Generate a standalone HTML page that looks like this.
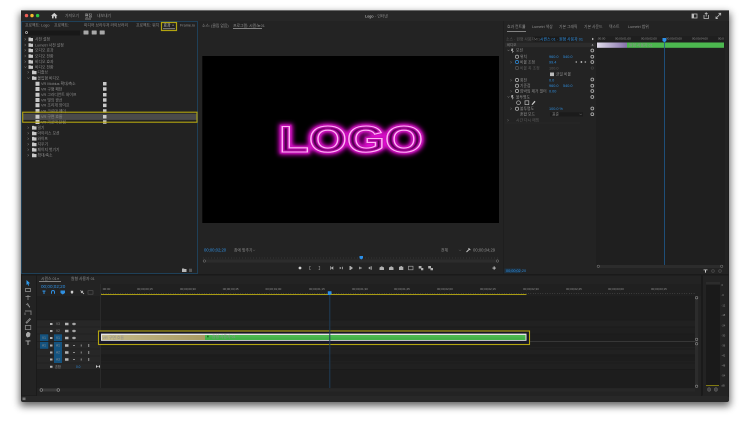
<!DOCTYPE html>
<html lang="ko"><head><meta charset="utf-8"><title>Logo</title>
<style>
html,body{margin:0;padding:0;background:#fff;width:750px;height:422px;overflow:hidden}
svg{display:block;filter:blur(.3px)}
text{font-family:"Liberation Sans","Noto Sans CJK KR",sans-serif;font-size:3.8px;fill:#8f8f8f}
.b{fill:#2f8fe0}.w{fill:#d8d8d8}.d{fill:#5c5c5c}.k{fill:#111}
.ic{fill:none;stroke:#bdbdbd;stroke-width:.8}
.f{fill:#c9c9c9}
.r{fill:none;stroke:#a8a8a8;stroke-width:.9}
</style></head><body>
<svg width="750" height="422" viewBox="0 0 750 422" xmlns="http://www.w3.org/2000/svg">
<defs>
<filter id="sh" x="-5%" y="-5%" width="110%" height="115%"><feGaussianBlur stdDeviation="4"/></filter>
<filter id="gl" x="-20%" y="-50%" width="140%" height="200%"><feGaussianBlur stdDeviation="2.4"/></filter>
<filter id="gs" x="-20%" y="-50%" width="140%" height="200%"><feGaussianBlur stdDeviation=".5"/></filter>
<linearGradient id="lav" x1="0" x2="1"><stop offset="0" stop-color="#e0dcea"/><stop offset="1" stop-color="#8672ac"/></linearGradient>
<linearGradient id="tan" x1="0" x2="1"><stop offset="0" stop-color="#c4b98a"/><stop offset="1" stop-color="#a89a62"/></linearGradient>
</defs>
<rect x="20" y="13" width="710" height="393" fill="#000" opacity=".62" filter="url(#sh)"/>
<rect x="21" y="10" width="708" height="392" rx="3" fill="#1a1a1a"/>
<rect x="21" y="10" width="708" height="1" fill="#6a6a6a"/>
<rect x="21" y="11" width="708" height="10" fill="#272727"/>

<!-- title bar -->
<circle cx="26.5" cy="15.6" r="1.7" fill="#ee5f57"/><circle cx="32" cy="15.6" r="1.7" fill="#f5bb2e"/><circle cx="37.6" cy="15.6" r="1.7" fill="#2bc640"/>
<path d="M51 15.7 54.3 12.9 57.5 15.7H56.5V18.4H55V16.4H53.6V18.4H52V15.7Z" fill="#cfcfcf"/>
<text x="65" y="17">가져오기</text><text x="85" y="17" class="w">편집</text><rect x="85" y="18.7" width="6" height=".6" fill="#bbb"/><text x="97" y="17">내보내기</text>
<text x="365" y="17.3" class="w">Logo</text><text x="375" y="17.3">- 인터넷</text>
<rect x="692" y="14" width="5" height="4" class="ic"/><rect x="692" y="14" width="2" height="4" fill="#bdbdbd"/>
<path d="M704 15V18.5H708.5V15M706.2 16.5V12.8M704.8 14 706.2 12.8 707.6 14" class="ic"/>
<path d="M716 18.5 720.5 13.5M718.5 13.3H720.7V15.5M716 16.5V18.6H718" class="ic"/>

<!-- project panel -->
<rect x="21.5" y="21.5" width="176" height="252" fill="#222" stroke="#1f4058" stroke-width="1"/>
<text x="25" y="26.5">프로젝트: Logo</text><text x="54" y="26.5">프로젝트:</text><text x="84" y="26.5">미디어 브라우저 라이브러리</text><text x="136" y="26.5">프로젝트: 위치</text>
<text x="163.5" y="26.5" class="w">효과</text><text x="172" y="26.5">≡</text><rect x="163" y="28.4" width="12" height=".7" fill="#aaa"/>
<rect x="161.5" y="22.5" width="15" height="8" fill="none" stroke="#b3a410" stroke-width="1.2"/>
<text x="180" y="26.5">Frame.io</text>
<rect x="24" y="30.5" width="56" height="5" fill="#181818"/><circle cx="26.5" cy="32.5" r="1" class="ic"/>
<rect x="83.5" y="30.5" width="5" height="4" rx=".5" fill="#a8a8a8"/><rect x="91.7" y="30.5" width="5" height="4" rx=".5" fill="#a8a8a8"/><rect x="99.7" y="30.5" width="5" height="4" rx=".5" fill="#a8a8a8"/>

<g>
<path d="M24.6 38.3 25.8 39.3 24.6 40.3M24.6 44 25.8 45 24.6 46M24.6 49.3 25.8 50.3 24.6 51.3M24.6 55 25.8 56 24.6 57M24.6 60.7 25.8 61.7 24.6 62.7M27.6 71.3 28.8 72.3 27.6 73.3M27.6 126.7 28.8 127.7 27.6 128.7M27.6 132.3 28.8 133.3 27.6 134.3M27.6 137.7 28.8 138.7 27.6 139.7M27.6 143.3 28.8 144.3 27.6 145.3M27.6 148.7 28.8 149.7 27.6 150.7M27.6 154.3 28.8 155.3 27.6 156.3" fill="none" stroke="#888" stroke-width=".5"/>
<path d="M24.4 66.5 25.4 67.7 26.4 66.5M27.4 77.5 28.4 78.7 29.4 77.5" fill="none" stroke="#888" stroke-width=".5"/>
<path class="f" d="M28.5 37.5H30.5L31 38H33V41.2H28.5ZM28.5 43.2H30.5L31 43.7H33V46.9H28.5ZM28.5 48.5H30.5L31 49H33V52.2H28.5ZM28.5 54.2H30.5L31 54.7H33V57.9H28.5ZM28.5 59.9H30.5L31 60.4H33V63.6H28.5ZM28.5 65.2H30.5L31 65.7H33V68.9H28.5ZM32 70.5H34L34.5 71H36.5V74.2H32ZM32 76.2H34L34.5 76.7H36.5V79.9H32ZM32 125.9H34L34.5 126.4H36.5V129.6H32ZM32 131.5H34L34.5 132H36.5V135.2H32ZM32 136.9H34L34.5 137.4H36.5V140.6H32ZM32 142.5H34L34.5 143H36.5V146.2H32ZM32 147.9H34L34.5 148.4H36.5V151.6H32ZM32 153.5H34L34.5 154H36.5V157.2H32Z"/>
<text x="35" y="40.7">사전 설정</text><text x="35" y="46.4">Lumetri 사전 설정</text><text x="35" y="51.7">오디오 효과</text><text x="35" y="57.4">오디오 전환</text><text x="35" y="63.1">비디오 효과</text><text x="35" y="68.4">비디오 전환</text>
<text x="37.5" y="73.7">디졸브</text><text x="37.5" y="79.4">몰입형 비디오</text>
<text x="37.5" y="129.1">밀기</text><text x="37.5" y="134.7">아이리스 모션</text><text x="37.5" y="140.1">와이프</text><text x="37.5" y="145.7">지우기</text><text x="37.5" y="151.1">페이지 벗기기</text><text x="37.5" y="156.7">확대/축소</text>
</g>
<rect x="23" y="113.7" width="173.5" height="6.2" fill="#4a4a4a"/>
<g>
<path class="f" d="M35.5 81.7H39.5V85.7H35.5ZM35.5 87H39.5V91H35.5ZM35.5 92.7H39.5V96.7H35.5ZM35.5 98H39.5V102H35.5ZM35.5 103.3H39.5V107.3H35.5ZM35.5 109H39.5V113H35.5ZM35.5 114.7H39.5V118.7H35.5ZM35.5 120H39.5V124H35.5Z"/>
<path class="f" d="M103 82H106.5V85.5H103ZM103 87.3H106.5V90.8H103ZM103 93H106.5V96.5H103ZM103 98.3H106.5V101.8H103ZM103 103.6H106.5V107.1H103ZM103 109.3H106.5V112.8H103ZM103 115H106.5V118.5H103ZM103 120.3H106.5V123.8H103Z"/>
<text x="41" y="85">VR Mobius 확대/축소</text><text x="41" y="90.4">VR 구형 패턴</text><text x="41" y="96.1">VR 그라디언트 와이프</text><text x="41" y="101.4">VR 빛의 광선</text><text x="41" y="106.7">VR 조리개 와이프</text><text x="41" y="112.4">VR 크로마 페더</text><text x="41" y="118.1" fill="#c8c8c8">VR 구면 흐름</text><text x="41" y="123.4">VR 가로막 닫힘</text>
</g>
<rect x="22.7" y="112.2" width="174.3" height="10" fill="none" stroke="#b3a410" stroke-width="1.1"/>
<path class="f" d="M182 268.5H184L184.5 269H186.5V272H182Z" opacity=".9"/><rect x="189" y="268.7" width="3" height="3.3" fill="#555"/>

<!-- program monitor -->
<rect x="198" y="21" width="305.5" height="253" fill="#232323"/>
<text x="202" y="26.8">소스: (클립 없음)</text><text x="233" y="26.8" fill="#c8c8c8">프로그램: 시퀀스 01</text><text x="258" y="26.8">≡</text><rect x="233" y="28" width="29" height=".7" fill="#aaa"/>
<rect x="202.3" y="56" width="296.7" height="167" fill="#000"/>
<g>
<text x="279" y="152" textLength="144" lengthAdjust="spacingAndGlyphs" style="font-size:37px;font-weight:bold;fill:none;stroke:#f010e0;stroke-width:5" filter="url(#gl)">LOGO</text>
<text x="279" y="152" textLength="144" lengthAdjust="spacingAndGlyphs" style="font-size:37px;font-weight:bold;fill:#4a0548;stroke:#c40fb4;stroke-width:3.2" filter="url(#gs)">LOGO</text>
<text x="279" y="152" textLength="144" lengthAdjust="spacingAndGlyphs" style="font-size:37px;font-weight:bold;fill:none;stroke:#ffb4f6;stroke-width:1.1">LOGO</text>
</g>
<text x="204" y="251.5" class="b" style="font-size:4.2px">00;00;02;20</text>
<text x="234" y="251.3">창에 맞추기</text><path d="M253 249.8 254 250.8 255 249.8" fill="none" stroke="#777" stroke-width=".4"/>
<text x="441" y="251.3">전체</text><path d="M459 249.8 460 250.8 461 249.8" fill="none" stroke="#777" stroke-width=".4"/>
<path d="M466.5 252 469 249.5M468.5 248.2 470.3 250" fill="none" stroke="#ccc" stroke-width=".9"/>
<text x="473" y="251.5" style="font-size:4.2px">00;00;04;29</text>
<line x1="203" x2="498" y1="258" y2="258" stroke="#555" stroke-width=".8" stroke-dasharray=".5 2.3"/>
<rect x="204" y="259.5" width="293" height="3" fill="#2c2c2c"/>
<circle cx="204.3" cy="261" r="1.2" fill="#222" stroke="#888" stroke-width=".5"/><circle cx="497.5" cy="261" r="1.2" fill="#222" stroke="#888" stroke-width=".5"/>
<path d="M359.5 256H363V258.3L361.3 259.5 359.5 258.3Z" fill="#2b8fe8"/>
<g fill="#b0b0b0">
<circle cx="300" cy="268" r="1.4" fill="#d0d0d0"/>
<path d="M310.8 266.3 309.6 266.3V269.7H310.8M318.6 266.3H319.8V269.7H318.6" fill="none" stroke="#999" stroke-width=".5"/>
<path d="M330.3 266.3V269.7H331V268.2L333.3 269.7V266.3L331 267.8V266.3ZM339.7 266.8V269.2L341.5 268ZM342 266.8V269.2H342.8V266.8ZM349.5 266H350.4L353 268 350.4 270H349.5ZM359 266.8V269.2H359.8V266.8ZM360.3 266.8V269.2L362 268ZM368.2 268 370.5 266.3V269.7ZM371 266.3V269.7H371.7V266.3Z"/>
<path d="M379.5 270V267.5L381.7 266.2 384 267.5V270ZM389 270V267.5L391.3 266.2 393.5 267.5V270ZM399 266.8H400.2L400.7 266H401.7L402.2 266.8H403.3V270H399ZM418.7 266H421.5V268.5H418.7ZM421 268H423.3V270.3H421ZM428.2 266H431V268.5H428.2ZM430.5 268H433V270.3H430.5Z"/>
<rect x="408.5" y="266.2" width="4.5" height="3.6" fill="none" stroke="#b0b0b0" stroke-width=".6"/>
<path d="M493.7 266.3H494.6V267.6H495.9V268.5H494.6V269.8H493.7V268.5H492.4V267.6H493.7Z" fill="#c8c8c8"/>
</g>

<!-- effect controls -->
<rect x="504" y="21" width="224.5" height="253" fill="#232323"/>
<text x="507" y="28" fill="#d0d0d0">효과 컨트롤</text><text x="523" y="28">≡</text><rect x="507" y="31" width="19" height=".7" fill="#aaa"/>
<text x="532" y="28">Lumetri 색상</text><text x="559" y="28">기본 그래픽</text><text x="584" y="28">기본 사운드</text><text x="609" y="28">텍스트</text><text x="628" y="28">Lumetri 범위</text>
<rect x="596" y="36" width="129" height="229" fill="#1f1f1f"/>
<rect x="533" y="36.5" width="42" height="5" fill="#1a1a1a"/>
<text x="506" y="40.3" class="d">소스 · 원형 사용자 01</text><text x="540" y="40.3" class="b">시퀀스 01 · 원형 사용자 01</text>
<path d="M534.5 38.5 535.5 39.7 536.5 38.5" fill="none" stroke="#999" stroke-width=".4"/>
<path d="M592 37.8 594 39 592 40.2Z" fill="#bbb"/>
<g>
<text x="597" y="39.7" style="font-size:3px">:00:00</text><text x="615" y="39.7" style="font-size:3px">00;00;01;00</text><text x="641" y="39.7" style="font-size:3px">00;00;02;00</text><text x="666" y="39.7" style="font-size:3px">00;00;03;00</text><text x="692" y="39.7" style="font-size:3px">00;00;04;00</text><text x="718" y="39.7" style="font-size:3px">00;0</text>
</g>
<rect x="597" y="42.5" width="30" height="5.3" fill="url(#lav)"/><rect x="627" y="42.5" width="97" height="5.3" fill="#4cb84f"/>
<text x="629" y="46.4" fill="#113d13">원형 사용자 01</text>
<rect x="664.2" y="39" width=".8" height="227" fill="#1e5a8e"/>
<path d="M662.5 38H666.3V41L664.4 42.3 662.5 41Z" fill="#2b8fe8"/>
<rect x="505" y="42.7" width="91" height="4.4" fill="#2c2c2c"/>
<text x="507" y="46" style="font-size:3.4px">비디오</text><path d="M592.5 44 593.5 45.5H591.5Z" fill="#aaa"/>
<g>
<text x="516" y="51.7">모션</text><text x="520" y="58">위치</text><text x="520" y="63.4">비율 조정</text><text x="520" y="69.4" class="d">비율 폭 조정</text><text x="556" y="75.7">균일 비율</text><text x="520" y="81.4">회전</text><text x="520" y="87">기준점</text><text x="520" y="92.4">깜박임 제거 필터</text><text x="516" y="98.4">불투명도</text><text x="520" y="110">불투명도</text><text x="520" y="115.7">혼합 모드</text><text x="516" y="121.7" class="d">시간 다시 매핑</text>
<text x="549" y="58" class="b">960.0</text><text x="563" y="58" class="b">540.0</text><text x="549" y="63.4" class="b">99.4</text><text x="549" y="69.4" class="d">100.0</text><text x="549" y="81.4" class="b">0.0</text><text x="549" y="87" class="b">960.0</text><text x="563" y="87" class="b">540.0</text><text x="549" y="92.4" class="b">0.00</text><text x="549" y="110" class="b">100.0 %</text>
<rect x="550" y="112.3" width="33" height="4.2" fill="#1b1b1b"/><text x="552" y="115.7">표준</text><path d="M579.5 113.8 580.7 115 581.8 113.8" fill="none" stroke="#888" stroke-width=".4"/>
<rect x="550" y="72.5" width="4" height="3.6" fill="#bbb"/>
<path d="M507.5 49.8 508.5 51 509.5 49.8M507.5 96.3 508.5 97.5 509.5 96.3M510.5 61.3 511.5 62.3 510.5 63.3M510.5 79.3 511.5 80.3 510.5 81.3M510.5 90.3 511.5 91.3 510.5 92.3M510.5 107.7 511.5 108.7 510.5 109.7M507.5 119.3 508.5 120.3 507.5 121.3" fill="none" stroke="#888" stroke-width=".45"/>
<g fill="none" stroke="#bbb" stroke-width=".7">
<circle cx="517" cy="56.7" r="1.6"/><circle cx="517" cy="62" r="1.6" stroke="#2f8fe0"/><circle cx="517" cy="80" r="1.6"/><circle cx="517" cy="85.7" r="1.6"/><circle cx="517" cy="91" r="1.6"/><circle cx="517" cy="108.7" r="1.6"/>
<circle cx="517" cy="68" r="1.6" stroke="#555"/>
<circle cx="518.5" cy="102.7" r="1.9"/><rect x="525" y="100.8" width="3.8" height="3.8"/>
</g>
<path d="M531.5 104.5 534.5 100.8 535.5 101.8 532.5 105Z" fill="#ccc"/>
<path d="M511.5 48.5H513.2L512.8 51H514L512 53.2 512.4 51H511ZM511.5 95H513.2L512.8 97.5H514L512 99.7 512.4 97.5H511Z" fill="#aaa"/>
<path d="M576.7 61 575.2 62 576.7 63ZM582.3 62a.9.9 0 1 1-1.8 0 .9.9 0 1 1 1.8 0ZM584.8 61 586.3 62 584.8 63Z" fill="#ccc"/>
<g class="r"><circle cx="592.3" cy="50.5" r="1.4"/><circle cx="592.3" cy="56.7" r="1.4"/><circle cx="592.3" cy="62" r="1.4"/><circle cx="592.3" cy="79.5" r="1.4"/><circle cx="592.3" cy="85.7" r="1.4"/><circle cx="592.3" cy="91" r="1.4"/><circle cx="592.3" cy="97" r="1.4"/><circle cx="592.3" cy="108.5" r="1.4"/><circle cx="592.3" cy="114.2" r="1.4"/></g>
<circle cx="592.3" cy="68" r="1.2" fill="none" stroke="#444" stroke-width=".7"/>
<line x1="505" x2="580" y1="123" y2="123" stroke="#2c2c2c" stroke-width=".5"/>
</g>
<rect x="598" y="265" width="124" height="3" fill="#2c2c2c"/><circle cx="598.3" cy="266.3" r="1.2" fill="#222" stroke="#888" stroke-width=".5"/><circle cx="721.7" cy="266.3" r="1.2" fill="#222" stroke="#888" stroke-width=".5"/>
<path d="M703.5 269.5H707.5V270.3H706V272.6H705V270.3H703.5Z" fill="#ccc"/><circle cx="713" cy="271" r="1.3" fill="none" stroke="#555" stroke-width=".6"/><circle cx="720" cy="271" r="1.3" fill="none" stroke="#555" stroke-width=".6"/>
<rect x="504.5" y="268.5" width="16" height="4.5" fill="#1a3a55" opacity=".7"/><text x="506" y="272" class="b">00;00;02;20</text>

<!-- tools -->
<rect x="22" y="275.5" width="14" height="120" fill="#232323"/>
<path d="M26.5 280 30 283.3 28.4 283.6 29.2 285.4 28.3 285.7 27.5 284 26.5 285Z" fill="#2f9cf0"/>
<g fill="none" stroke="#999" stroke-width=".7">
<path d="M25.5 288.5H30.5V291.5H25.5ZM25.5 296.5H30.5M28 295V300M26 304 30 306.5M27.5 303 29.5 307.5M25 311H31M25 312.5V315M31 310.5V315"/>
<path d="M26 322.5 29.8 318.5 30.5 319.2 26.8 323.2Z"/><rect x="25.3" y="325.5" width="5.5" height="4"/>
</g>
<path d="M26 336V333.5L27 333 27.3 332 28.5 332 29.5 332.5 30.5 333.5 30 336.5 27.5 337.5ZM25.5 340.5H30.5V341.4H28.5V345H27.5V341.4H25.5Z" fill="#aaa"/>

<!-- timeline -->
<rect x="37" y="275.5" width="664" height="120.5" fill="#232323"/>
<text x="41" y="280" fill="#c8c8c8">시퀀스 01</text><text x="57" y="280">≡</text><rect x="39" y="281" width="22" height=".7" fill="#aaa"/><text x="71" y="280">원형 사용자 01</text>
<text x="41" y="287.8" class="b" style="font-size:4.6px">00;00;02;20</text>
<g fill="#2f8fe0"><path d="M42.5 290.5H45.5V291.6H44.5V294H43.5V291.6H42.5Z"/><path d="M51 293.7V292a2 2 0 0 1 4 0V293.7H54V292a1 1 0 0 0-2 0V293.7Z"/><path d="M60.5 290.5H65V293L62.7 294.5 60.5 293Z"/></g>
<path d="M70.8 290.7H73.2V292.8L72 294 70.8 292.8Z" fill="#ccc"/><path d="M80.5 290.5 84 294M83 290.8 81 293" fill="none" stroke="#ccc" stroke-width=".8"/><rect x="88" y="290.7" width="5" height="3.5" fill="none" stroke="#555" stroke-width=".6"/>
<rect x="101" y="284" width="600" height="12" fill="#202020"/>
<g>
<text x="102" y="290" style="font-size:3px">:00:00</text><text x="137" y="290" style="font-size:3px">00;00;00;15</text><text x="180" y="290" style="font-size:3px">00;00;00;30</text><text x="222.7" y="290" style="font-size:3px">00;00;00;45</text><text x="265.5" y="290" style="font-size:3px">00;00;01;00</text><text x="309" y="290" style="font-size:3px">00;00;01;15</text><text x="352" y="290" style="font-size:3px">00;00;01;30</text><text x="394" y="290" style="font-size:3px">00;00;01;45</text><text x="437" y="290" style="font-size:3px">00;00;02;00</text><text x="480" y="290" style="font-size:3px">00;00;02;15</text><text x="523" y="290" style="font-size:3px">00;00;02;30</text><text x="566" y="290" style="font-size:3px">00;00;02;45</text><text x="608" y="290" style="font-size:3px">00;00;03;00</text><text x="651" y="290" style="font-size:3px">00;00;03;15</text>
</g>
<line x1="101" x2="696" y1="293.5" y2="293.5" stroke="#555" stroke-width=".9" stroke-dasharray=".5 1.9"/>
<rect x="101" y="294" width="425.5" height="1" fill="#a99c12"/>
<rect x="37" y="296" width="63" height="92" fill="#1f1f1f"/>
<rect x="101" y="296" width="594" height="92" fill="#1d1d1d"/>
<rect x="37" y="320" width="63" height="49.5" fill="#272727"/>
<rect x="101" y="320" width="594" height="7" fill="#212121"/><rect x="101" y="327" width="594" height="7" fill="#1f1f1f"/><rect x="101" y="347" width="594" height="7" fill="#212121"/><rect x="101" y="361" width="594" height="8" fill="#202020"/>
<g stroke="#181818" stroke-width=".4"><line x1="37" x2="695" y1="320" y2="320"/><line x1="37" x2="695" y1="327" y2="327"/><line x1="37" x2="695" y1="334" y2="334"/><line x1="37" x2="695" y1="341.7" y2="341.7"/><line x1="37" x2="695" y1="349" y2="349"/><line x1="37" x2="695" y1="356" y2="356"/><line x1="37" x2="695" y1="363" y2="363"/><line x1="37" x2="695" y1="369.5" y2="369.5"/></g>
<rect x="100" y="284" width=".7" height="104" fill="#2e2e2e"/>
<rect x="40" y="334.3" width="8.3" height="6.8" fill="#14537f"/><rect x="40" y="342" width="8.3" height="6.8" fill="#14537f"/>
<rect x="54" y="334.3" width="8" height="6.8" fill="#14537f"/><rect x="54" y="342" width="8" height="21" fill="#14537f"/>
<g>
<text x="42" y="338.8" style="font-size:3.2px">V1</text><text x="42" y="346.5" style="font-size:3.2px">A1</text>
<text x="56" y="325" style="font-size:3.2px">V3</text><text x="56" y="332" style="font-size:3.2px">V2</text><text x="56" y="338.8" fill="#cfe6f7" style="font-size:3.2px">V1</text><text x="56" y="346.5" fill="#cfe6f7" style="font-size:3.2px">A1</text><text x="56" y="353.5" fill="#cfe6f7" style="font-size:3.2px">A2</text><text x="56" y="360.5" fill="#cfe6f7" style="font-size:3.2px">A3</text>
<text x="55" y="367.8" style="font-size:3.2px">혼합</text><text x="76" y="367.8" class="b" style="font-size:3.2px">0.0</text>
</g>
<path fill="#b5b5b5" d="M50 323H52.5V325H50ZM50 330H52.5V332H50ZM50 337H52.5V339H50ZM50 344.5H52.5V346.5H50ZM50 351.5H52.5V353.5H50ZM50 358.5H52.5V360.5H50ZM50 365.8H52.5V367.8H50Z"/>
<path fill="#b5b5b5" d="M65 322.7H68.5V325.3H65ZM65 329.7H68.5V332.3H65ZM65 336.7H68.5V339.3H65ZM65 344.2H68.5V346.8H65ZM65 351.2H68.5V353.8H65ZM65 358.2H68.5V360.8H65Z"/>
<g fill="#a5a5a5"><ellipse cx="74" cy="324" rx="1.8" ry="1.2"/><ellipse cx="74" cy="331" rx="1.8" ry="1.2"/><ellipse cx="74" cy="338" rx="1.8" ry="1.2"/>
<rect x="73" y="345" width="2" height=".8"/><rect x="73" y="352" width="2" height=".8"/><rect x="73" y="359" width="2" height=".8"/>
<rect x="80.8" y="344.5" width=".8" height="2"/><rect x="80.8" y="351.5" width=".8" height="2"/><rect x="80.8" y="358.5" width=".8" height="2"/>
<rect x="88.3" y="344" width=".9" height="3"/><rect x="88.3" y="351" width=".9" height="3"/><rect x="88.3" y="358" width=".9" height="3"/></g>
<path d="M96 365 98 366.5 96 368ZM100 365 98.2 366.5 100 368Z" fill="#ccc"/>

<!-- clip -->
<rect x="530" y="341" width="166" height=".9" fill="#3a3a3a"/>
<rect x="98.5" y="331" width="431" height="13.5" fill="#171727" stroke="#b3a410" stroke-width="1.1"/>
<rect x="101" y="333.6" width="425.5" height="7.2" fill="#e6e6e6"/>
<rect x="102" y="335" width="103" height="5" fill="url(#tan)"/>
<rect x="205" y="335" width="320.5" height="5" fill="#4cb84f"/>
<rect x="205" y="337.4" width="320.5" height="2.6" fill="#43b049"/>
<text x="102.5" y="338.8" fill="#1c1c10">VR 구면 흐름</text>
<rect x="207" y="335.6" width="1.7" height="1.7" fill="#1d6b22"/><text x="212" y="337.8" fill="#1f4a20">원형 사용자 01</text>
<rect x="329.3" y="293" width="1" height="95" fill="#1e3d57"/>
<path d="M327.8 291.3H331.5V294H330.6V295H327.8Z" fill="#2b8fe8"/>

<!-- scrollbars -->
<rect x="695" y="296" width="3.2" height="91" fill="#2c2c2c"/>
<g fill="#222" stroke="#8a8a8a" stroke-width=".6"><circle cx="696.6" cy="297.7" r="1.2"/><circle cx="696.6" cy="339.4" r="1.2"/><circle cx="696.6" cy="343.8" r="1.2"/><circle cx="696.6" cy="386.3" r="1.2"/></g>
<rect x="39" y="388.5" width="656" height="3" fill="#272727"/><rect x="41" y="388.5" width="17" height="3" fill="#3a3a3a"/>
<circle cx="41.3" cy="390" r="1.3" fill="#222" stroke="#999" stroke-width=".6"/><circle cx="58.3" cy="390" r="1.3" fill="#222" stroke="#999" stroke-width=".6"/>

<!-- meter -->
<rect x="702" y="275.5" width="26.5" height="120.5" fill="#232323"/>
<rect x="702" y="275.5" width=".7" height="120" fill="#161616"/>
<rect x="706" y="282" width="14" height="104" fill="#1a1a1a"/>
<rect x="706" y="282" width="14" height="2.6" fill="#2c2c2c"/>
<rect x="706" y="385" width="13" height=".9" fill="#8c8412"/>
<g>
<text x="721.5" y="286" style="font-size:2.6px">0</text><text x="721.5" y="296" style="font-size:2.6px">-6</text><text x="721.5" y="306.5" style="font-size:2.6px">-12</text><text x="721.5" y="316" style="font-size:2.6px">-18</text><text x="721.5" y="326.5" style="font-size:2.6px">-24</text><text x="721.5" y="336.5" style="font-size:2.6px">-30</text><text x="721.5" y="346.5" style="font-size:2.6px">-36</text><text x="721.5" y="356.5" style="font-size:2.6px">-42</text><text x="721.5" y="366.5" style="font-size:2.6px">-48</text><text x="721.5" y="376.5" style="font-size:2.6px">-54</text><text x="721.5" y="386.5" style="font-size:2.6px">dB</text>
</g>
<rect x="707.7" y="387.8" width="2.8" height="3.4" rx="1" fill="#444" stroke="#888" stroke-width=".4"/><rect x="714.5" y="387.8" width="2.8" height="3.4" rx="1" fill="#444" stroke="#888" stroke-width=".4"/>

<!-- status bar -->
<rect x="21" y="396" width="708" height="6" rx="2" fill="#282828"/>
<rect x="22.5" y="397.5" width="3" height="2.6" fill="#777"/>
</svg>
</body></html>
